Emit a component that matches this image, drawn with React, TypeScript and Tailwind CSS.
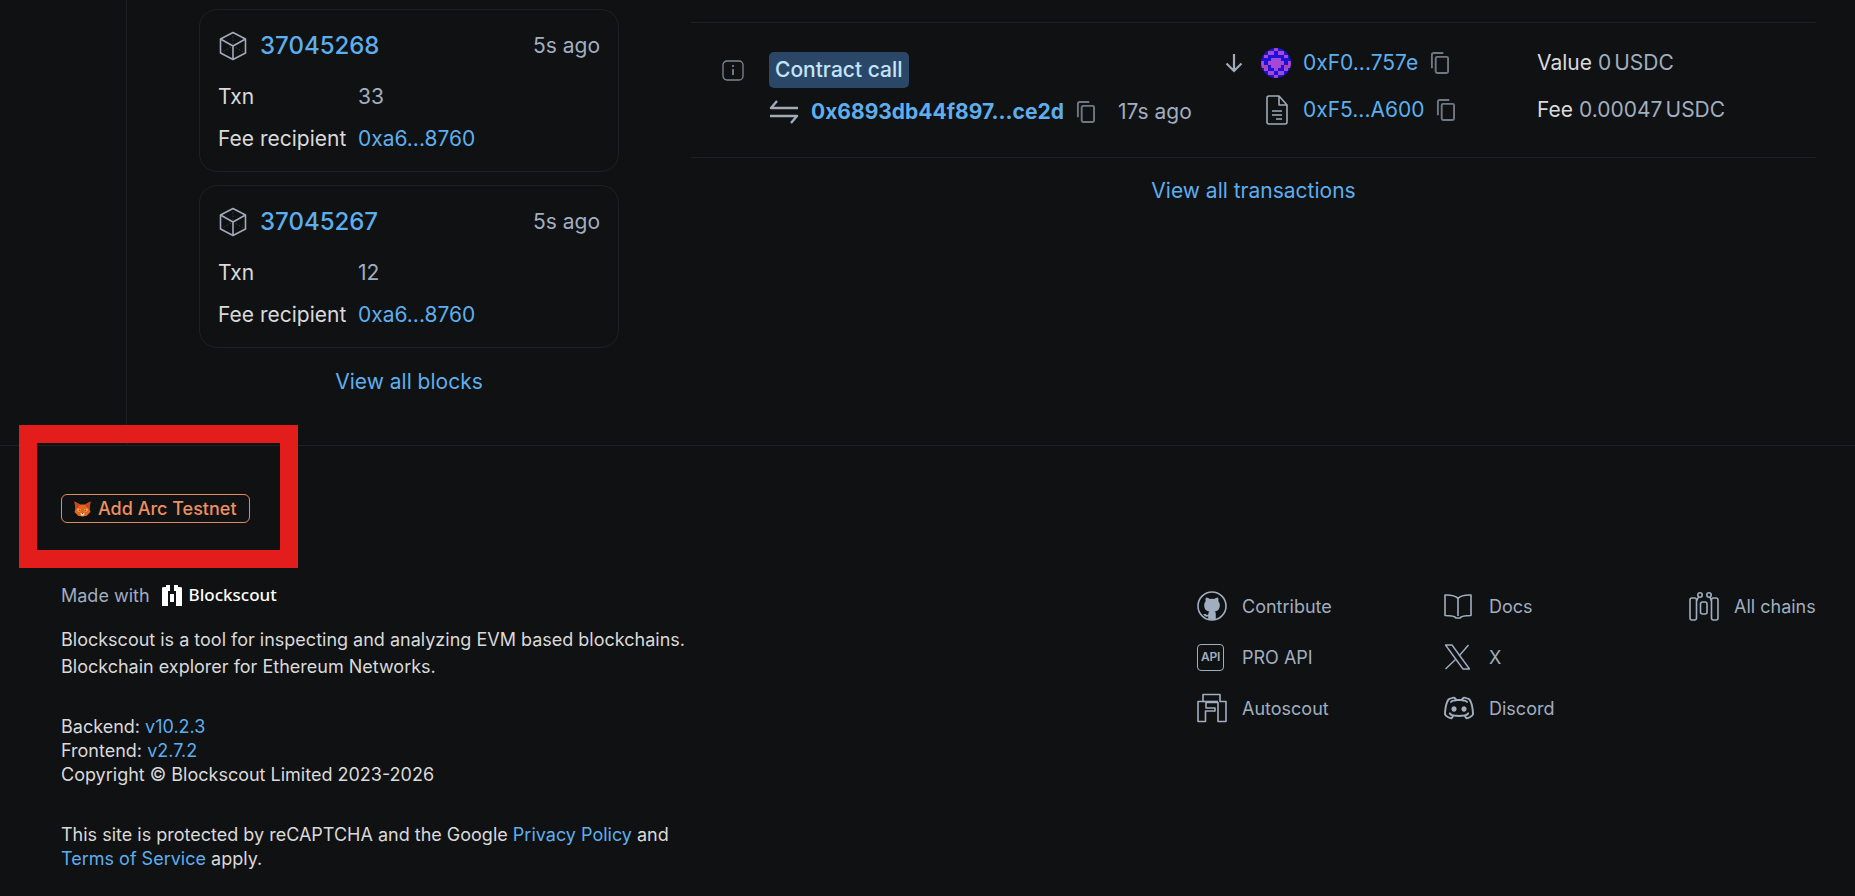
import React from 'react';
import { RxDiscordLogo } from 'react-icons/rx';

const BLUE = 'text-[#5eaeee]';

const CubeIcon = () => (
  <svg width="28" height="30" viewBox="0 0 28 30" fill="none" stroke="#a0aab8" strokeWidth="1.6" className="shrink-0 ml-px">
    <path d="M14 1.5 26.5 8v14L14 28.5 1.5 22V8Z" strokeLinejoin="round" />
    <path d="M1.5 8 14 15l12.5-7M14 15v14" strokeLinejoin="round" />
    <path d="M14 1.5V15M1.5 22 14 15l12.5 7" strokeWidth="0.5" strokeDasharray="1.5 2" opacity="0.6" />
  </svg>
);

const CopyIcon = () => (
  <svg width="19" height="22" viewBox="0 0 20 23" fill="none" stroke="#6e7884" strokeWidth="2" className="shrink-0">
    <path d="M2 17V3a2 2 0 0 1 2-2h10" />
    <rect x="6" y="5" width="13" height="17" rx="1.5" />
  </svg>
);

const InfoIcon = () => (
  <svg width="22" height="21" viewBox="0 0 22 21" fill="none" className="shrink-0">
    <rect x="1" y="1" width="20" height="19" rx="4" stroke="#7c8794" strokeWidth="1.3" />
    <path d="M11 9v6" stroke="#9aa5b1" strokeWidth="1.4" />
    <circle cx="11" cy="6" r="0.9" fill="#9aa5b1" />
  </svg>
);

const SwapIcon = () => (
  <svg width="30" height="24" viewBox="0 0 30 24" fill="none" stroke="#a0aab8" strokeWidth="2.4" className="shrink-0">
    <path d="M29 8H2l6-7" strokeLinejoin="round" />
    <path d="M1 16h27l-6 7" strokeLinejoin="round" />
  </svg>
);

const DocIcon = () => (
  <svg width="22" height="30" viewBox="0 0 22 30" fill="none" stroke="#a0aab8" strokeWidth="1.6" className="shrink-0">
    <path d="M3 1h10l8 9v17a2 2 0 0 1-2 2H3a2 2 0 0 1-2-2V3a2 2 0 0 1 2-2Z" strokeLinejoin="round" />
    <path d="M13 1v9h8" strokeLinejoin="round" />
    <path d="M6 16h10M6 20h10M10 24h6" strokeWidth="1.3" />
  </svg>
);

const ArrowDown = () => (
  <svg width="18" height="20" viewBox="0 0 18 20" fill="none" stroke="#a0aab8" strokeWidth="2.2" className="shrink-0">
    <path d="M9 1v17M1.5 10.5 9 18l7.5-7.5" />
  </svg>
);

// pixel avatar, mirrored around the middle column
const avatarRows = [
  '..BBPBB..',
  '.BPPBPPB.',
  'BPBBBBBPB',
  'BBBPPPBBB',
  'PBPPPPPBP',
  'PRBPPPBRP',
  'BPBBPBBPB',
  '.BPPBPPB.',
  '..BBPBB..',
];
const avatarColors: Record<string, string> = { B: '#1c12d8', P: '#a548d6', R: '#b83fa8' };

const Avatar = () => (
  <svg width="30" height="30" viewBox="0 0 9 9" className="shrink-0 rounded-full" shapeRendering="crispEdges">
    {avatarRows.map((row, y) =>
      row.split('').map((c, x) => (c === '.' ? null : <rect key={`${x}-${y}`} x={x} y={y} width="1" height="1" fill={avatarColors[c]} />))
    )}
  </svg>
);

const FoxIcon = () => (
  <svg width="17" height="16" viewBox="0 0 17 16" className="shrink-0">
    <path d="M0.5 0.5 6 3.5h5L16.500 0.500 15.500 8l1 3-4 4H11l-1.500 .500h-2L6 15H4.500l-4-4 1-3Z" fill="#e2661b" />
    <path d="M3 7 7 8.500 6 11 3.500 10Z M14 7 10 8.500 11 11 13.500 10Z" fill="#f6a45c" />
    <path d="M5 8.500 6.500 9.200 5.500 10Z M12 8.500 10.500 9.200 11.500 10Z" fill="#2b1a10" />
    <path d="M6.500 12h4L10 14.500H7Z" fill="#e8dccf" />
    <path d="M7.500 12h2l-1 1Z" fill="#2b1a10" />
    <path d="M0.500 0.500 6 3.500 4 7 1.500 8Z M16.500 0.500 11 3.500 13 7 15.500 8Z" fill="#c9471a" />
  </svg>
);

const BlockscoutLogo = () => (
  <svg width="20" height="21" viewBox="0 0 20 21" fill="#ffffff" className="shrink-0">
    <path d="M0 4h6v17H0Z M14 4h6v17h-6Z M4 0h4v6H4Z M12 0h4v6h-4Z M8 9h4v8H8Z" />
    <path d="M0 2.500 2 2h2v2H0Z M20 2.500 18 2h-2v2h4Z" />
  </svg>
);

const GithubIcon = () => (
  <svg width="30" height="30" viewBox="0 0 30 30" fill="none" className="shrink-0">
    <circle cx="15" cy="15" r="14" stroke="#a0aec0" strokeWidth="1.6" />
    <path
      d="M9 6.500c1.400 0 3 .8 3.800 1.600a10 10 0 0 1 4.400 0C18 7.300 19.600 6.500 21 6.500c.6 1.500.6 2.900.3 3.800 1 1.100 1.500 2.400 1.500 3.900 0 4.600-2.600 5.800-5 6.200.8.700 1 1.700 1 2.800v5a14 14 0 0 1-7.600 0v-2.600c-2.800.5-4-.8-5-2.600h2.500c.8 1 1.600 1.100 2.500.8 0-1 .3-2.500 1-3.400-2.400-.4-5-1.600-5-6.200 0-1.500.5-2.800 1.500-3.900C8.400 9.400 8.400 8 9 6.500Z"
      fill="#a0aec0"
    />
  </svg>
);

const DocsIcon = () => (
  <svg width="28" height="25" viewBox="0 0 28 25" fill="none" stroke="#a0aec0" strokeWidth="1.6" strokeLinejoin="round" className="shrink-0">
    <path d="M14 4.500C11.500 1.800 7 1 2.500 1H1v20.500c5 0 9.500.2 11 2.500h4c1.500-2.300 6-2.500 11-2.500V1h-1.500C21 1 16.500 1.800 14 4.500Z" />
    <path d="M14 4.500V22" />
  </svg>
);

const ApiIcon = () => (
  <div className="w-[27px] h-[27px] border-[1.5px] border-[#a0aec0] rounded-[4px] flex items-center justify-center shrink-0 text-[12px] font-semibold tracking-tight text-[#a0aec0] leading-none">
    API
  </div>
);

const XIcon = () => (
  <svg width="27" height="26" viewBox="0 0 27 26" fill="none" stroke="#a0aec0" strokeWidth="1.4" strokeLinejoin="round" className="shrink-0">
    <path d="M1.500 1H8l17.500 24H19Z" />
    <path d="M24.500 1 15 12M11.500 15.500 1.500 25" />
  </svg>
);

const AutoscoutIcon = () => (
  <svg width="30" height="30" viewBox="0 0 30 30" fill="none" stroke="#a0aec0" strokeWidth="1.6" strokeLinejoin="round" className="shrink-0">
    <path d="M1 8.500h5V1.500h17v7h6v20h-8V9.500H9v5.500h9v3h-9.500v10.500H1Z" />
    <path d="M6 8.500h15" />
  </svg>
);

const ChainsIcon = () => (
  <svg width="30" height="29" viewBox="0 0 30 29" fill="none" stroke="#a0aec0" strokeWidth="1.6" className="shrink-0">
    <rect x="1" y="6" width="6.500" height="22" rx="2" />
    <rect x="22.500" y="6" width="6.500" height="22" rx="2" />
    <rect x="11.500" y="10" width="6.500" height="12" rx="2" />
    <circle cx="11" cy="3" r="2.200" />
    <circle cx="20" cy="3" r="2.200" />
    <path d="M7.500 9C8.500 7 9 6 9.500 5M22.500 9c-.8-2-1.200-3-1.500-4" />
  </svg>
);

const BlockCard = ({ height, txn }: { height: string; txn: string }) => (
  <div className="h-[163px] border border-[#1e2124] rounded-[18px] px-[18px] pt-[21px] flex flex-col">
    <div className="flex items-center h-[30px]">
      <CubeIcon />
      <span className={`ml-[13px] text-[24px] font-medium ${BLUE}`}>{height}</span>
      <span className="ml-auto text-[#a0aec0] text-[21px]">5s ago</span>
    </div>
    <div className="flex items-center mt-[21px] h-[30px]">
      <span className="w-[140px] text-[#dadada] text-[21px]">Txn</span>
      <span className="text-[#a0aec0] text-[21px]">{txn}</span>
    </div>
    <div className="flex items-center mt-[12px] h-[30px]">
      <span className="w-[140px] text-[#dadada] text-[21px] whitespace-nowrap">Fee recipient</span>
      <span className={`text-[21px] ${BLUE}`}>0xa6...8760</span>
    </div>
  </div>
);

const FooterLink = ({ icon, label }: { icon: React.ReactNode; label: string }) => (
  <div className="flex items-center h-[30px]">
    <div className="w-[45px] flex items-center shrink-0">{icon}</div>
    <span className="text-[#a0aec0] text-[18px] whitespace-nowrap">{label}</span>
  </div>
);

export default function App() {
  return (
    <div className="relative h-[896px] overflow-hidden bg-[#101112] flex flex-col text-[#dadada]" style={{ fontFamily: 'Inter, "Noto Sans", sans-serif' }}>
      {/* Main area */}
      <div className="h-[446px] shrink-0 flex border-b border-[#1e2124]">
        <div className="w-[127px] shrink-0 border-r border-[#1e2124]" />

        {/* Latest blocks */}
        <div className="ml-[72px] w-[420px] shrink-0 pt-[9px]">
          <div className="flex flex-col gap-[13px]">
            <BlockCard height="37045268" txn="33" />
            <BlockCard height="37045267" txn="12" />
          </div>
          <div className={`text-center mt-[20px] text-[21px] leading-[28px] ${BLUE}`}>View all blocks</div>
        </div>

        {/* Latest transactions */}
        <div className="ml-[72px] w-[1125px] shrink-0 pt-[22px]">
          <div className="h-[136px] border-t border-b border-[#1e2124] flex pt-[29px]">
            <div className="ml-[31px] w-[47px] shrink-0 pt-[8px]">
              <InfoIcon />
            </div>
            <div className="w-[456px] shrink-0">
              <div className="inline-flex items-center h-[36px] px-[6px] rounded-[5px] bg-[#2b4768] text-[#c3e4fa] text-[21px] font-medium">Contract call</div>
              <div className="flex items-center mt-[9px] h-[30px]">
                <SwapIcon />
                <span className={`ml-[12px] text-[21px] font-bold ${BLUE}`}>0x6893db44f897...ce2d</span>
                <span className="ml-[12px]">
                  <CopyIcon />
                </span>
                <span className="ml-[23px] text-[#a0aec0] text-[21px]">17s ago</span>
              </div>
            </div>
            <div className="w-[312px] shrink-0">
              <div className="flex items-center h-[30px] -mt-[4px]">
                <div className="w-[36px] shrink-0">
                  <ArrowDown />
                </div>
                <Avatar />
                <span className={`ml-[12px] text-[21px] ${BLUE}`}>0xF0...757e</span>
                <span className="ml-[12px]">
                  <CopyIcon />
                </span>
              </div>
              <div className="flex items-center h-[30px] mt-[17px]">
                <div className="w-[41px] shrink-0" />
                <DocIcon />
                <span className={`ml-[15px] text-[21px] ${BLUE}`}>0xF5...A600</span>
                <span className="ml-[12px]">
                  <CopyIcon />
                </span>
              </div>
            </div>
            <div className="text-[21px]">
              <div className="flex items-center h-[30px] -mt-[4px]">
                <span>Value</span>
                <span className="ml-[6px] text-[#a0aec0]">0</span>
                <span className="ml-[3px] text-[#a0aec0]">USDC</span>
              </div>
              <div className="flex items-center h-[30px] mt-[17px]">
                <span>Fee</span>
                <span className="ml-[6px] text-[#a0aec0]">0.00047</span>
                <span className="ml-[3px] text-[#a0aec0]">USDC</span>
              </div>
            </div>
          </div>
          <div className={`text-center mt-[19px] text-[21px] leading-[28px] ${BLUE}`}>View all transactions</div>
        </div>
      </div>

      {/* Footer */}
      <div className="flex-1 flex pl-[61px]">
        <div className="w-[1136px] shrink-0 pt-[48px]">
          <button className="flex items-center h-[29px] px-[12px] gap-[7px] border border-[#e08b5e] rounded-[6px] text-[#ec9060] text-[18px] font-medium">
            <FoxIcon />
            Add Arc Testnet
          </button>
          <div className="flex items-center mt-[59px] h-[26px]">
            <span className="text-[#a0aec0] text-[18px]">Made with</span>
            <span className="ml-[12px]">
              <BlockscoutLogo />
            </span>
            <span className="ml-[7px] text-white text-[17px] font-medium" style={{ fontFamily: '"Noto Sans", sans-serif' }}>
              Blockscout
            </span>
          </div>
          <div className="mt-[18px] text-[18px] leading-[27px]">
            <div>Blockscout is a tool for inspecting and analyzing EVM based blockchains.</div>
            <div>Blockchain explorer for Ethereum Networks.</div>
          </div>
          <div className="mt-[35px] text-[18px] leading-[24px]">
            <div>
              Backend: <span className={BLUE}>v10.2.3</span>
            </div>
            <div>
              Frontend: <span className={BLUE}>v2.7.2</span>
            </div>
            <div>Copyright © Blockscout Limited 2023-2026</div>
          </div>
          <div className="mt-[36px] text-[18px] leading-[24px]">
            <div>
              This site is protected by reCAPTCHA and the Google <span className={BLUE}>Privacy Policy</span> and
            </div>
            <div>
              <span className={BLUE}>Terms of Service</span> apply.
            </div>
          </div>
        </div>

        <div className="w-[619px] shrink-0 grid grid-cols-[247px_245px_127px] auto-rows-[30px] gap-y-[21px] pt-[145px] content-start">
          <FooterLink icon={<GithubIcon />} label="Contribute" />
          <FooterLink icon={<DocsIcon />} label="Docs" />
          <FooterLink icon={<ChainsIcon />} label="All chains" />
          <FooterLink icon={<ApiIcon />} label="PRO API" />
          <FooterLink icon={<XIcon />} label="X" />
          <div />
          <FooterLink icon={<AutoscoutIcon />} label="Autoscout" />
          <FooterLink icon={<RxDiscordLogo size={30} color="#a0aec0" />} label="Discord" />
        </div>
      </div>

      {/* Red highlight drawn over the page */}
      <div className="absolute left-[19px] top-[425px] w-[279px] h-[143px] border-[18px] border-[#e31c1c] pointer-events-none" />
    </div>
  );
}
